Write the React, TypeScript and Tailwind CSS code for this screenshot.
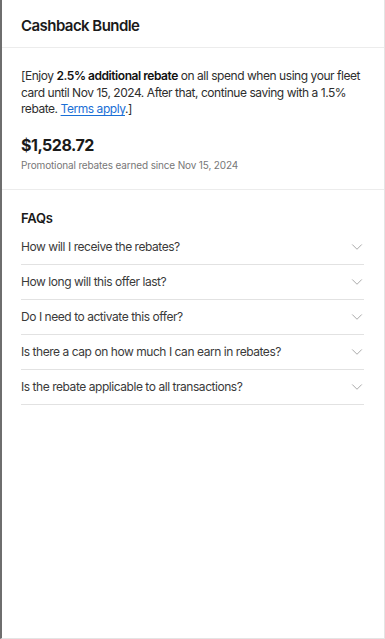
import { ChevronDown } from 'lucide-react';

const faqs = [
  'How will I receive the rebates?',
  'How long will this offer last?',
  'Do I need to activate this offer?',
  'Is there a cap on how much I can earn in rebates?',
  'Is the rebate applicable to all transactions?',
];

export default function App() {
  return (
    <div
      className="w-[385px] h-[639px] bg-white border-l-2 border-l-[#6e6e6e] border-r border-r-[#e4e4e4] border-b border-b-[#e4e4e4] flex flex-col text-[#1a1a1a]"
      style={{ fontFamily: 'Inter, "Noto Sans", sans-serif' }}
    >
      {/* Заголовок */}
      <header className="h-[48px] flex items-center px-[19px] pt-[5px] border-b border-[#ececec]">
        <h1 className="text-[15px] font-semibold tracking-[-0.55px]">Cashback Bundle</h1>
      </header>

      {/* Описание и сумма */}
      <section className="px-[19px] pt-[20px] pb-[17px] border-b border-[#ececec]">
        <p className="text-[12px] leading-[16.5px] tracking-[-0.45px] text-[#2e2e2e]">
          [Enjoy <span className="font-semibold text-[#111]">2.5% additional rebate</span> on all
          spend when using your fleet card until Nov 15, 2024. After that, continue saving with a
          1.5% rebate.{' '}
          <a href="#" className="text-[#1a6fd6] underline underline-offset-2">
            Terms apply
          </a>
          .]
        </p>
        <div className="mt-[17px] text-[16px] font-bold leading-[20px] tracking-[-0.5px]">
          $1,528.72
        </div>
        <div className="mt-[4px] text-[10px] leading-[13px] tracking-[-0.15px] text-[#777]">
          Promotional rebates earned since Nov 15, 2024
        </div>
      </section>

      {/* FAQ */}
      <section className="pl-[19px] pr-[20px] pt-[20px]">
        <h2 className="text-[13px] font-semibold leading-[17px] tracking-[-0.2px]">FAQs</h2>
        <ul className="mt-[3px]">
          {faqs.map((q) => (
            <li
              key={q}
              className="h-[35px] flex items-center justify-between border-b border-[#e2e2e2]"
            >
              <span className="text-[12px] tracking-[-0.45px] text-[#3a3a3a]">{q}</span>
              <ChevronDown className="w-[18px] h-[18px] text-[#a8a8a8] mr-[-2px]" strokeWidth={1.3} />
            </li>
          ))}
        </ul>
      </section>
    </div>
  );
}
